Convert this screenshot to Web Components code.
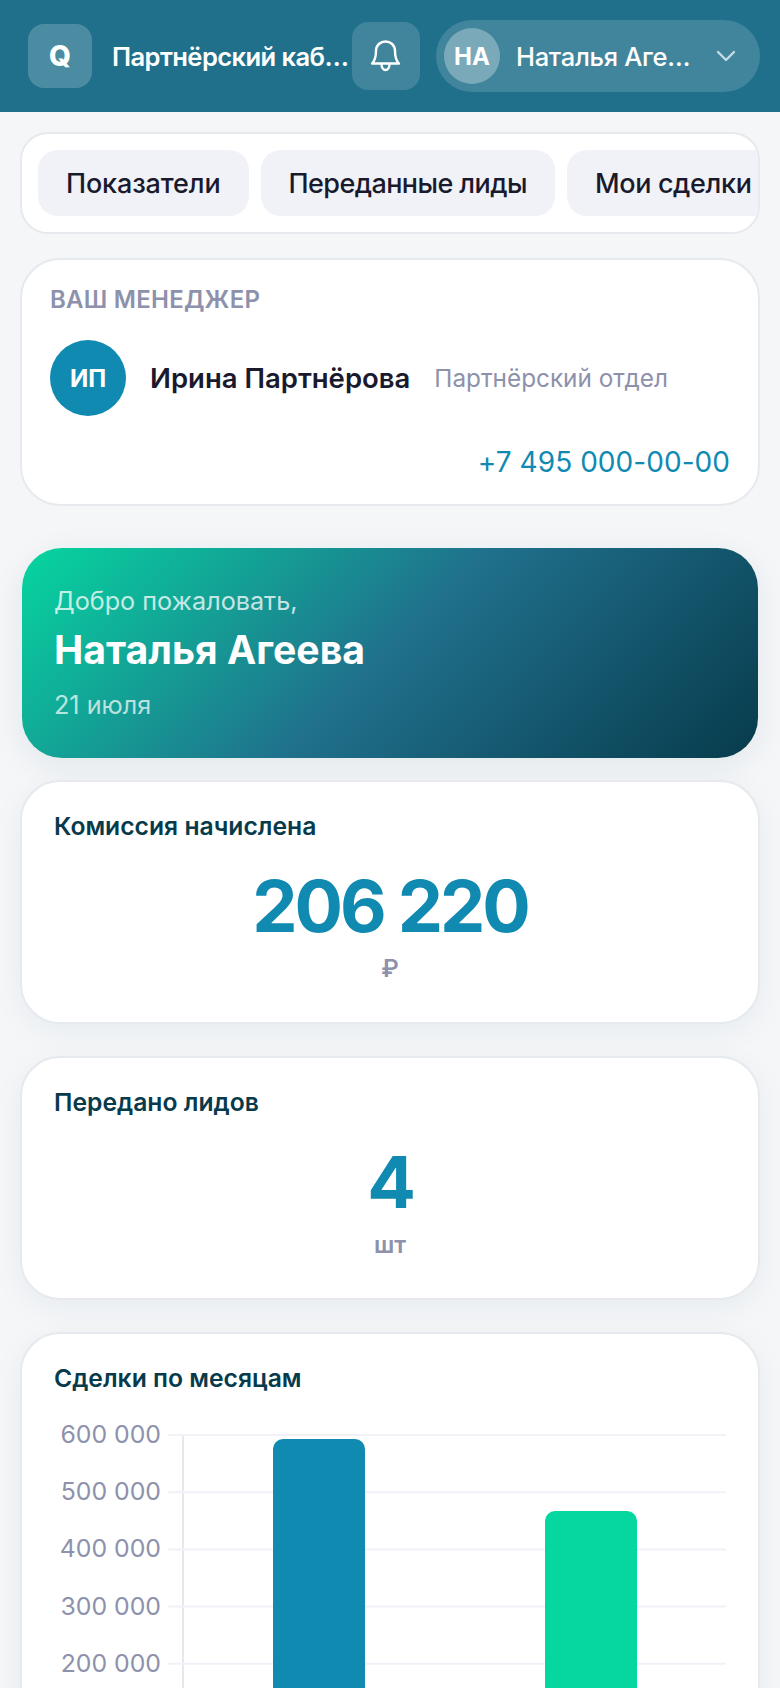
<!DOCTYPE html>
<html lang="ru">
<head>
<meta charset="utf-8">
<title>Партнёрский кабинет</title>
<style>
	html, body {
		height: 100%;
		margin: 0;
		overflow: hidden;
	}

	body {
		background: #f4f6f8;
		font-family: Inter, "Noto Sans", sans-serif;
		color: #1a1a2e;
	}

	main {
		display: flex;
		flex-direction: column;
		padding: 20px 20px 0;
	}
</style>
</head>
<body>
	<app-header title="Партнёрский кабинет" user="Наталья Агеева" initials="НА"></app-header>
	<main>
		<tab-bar>
			<tab-item selected>Показатели</tab-item>
			<tab-item style="letter-spacing: -0.58px">Переданные лиды</tab-item>
			<tab-item style="letter-spacing: -0.35px">Мои сделки</tab-item>
		</tab-bar>
		<manager-card name="Ирина Партнёрова" dept="Партнёрский отдел" phone="+7 495 000-00-00" initials="ИП"></manager-card>
		<hero-card name="Наталья Агеева" date="21 июля"></hero-card>
		<stat-card title="Комиссия начислена" value="206 220" unit="₽"></stat-card>
		<stat-card title="Передано лидов" value="4" unit="шт"></stat-card>
		<chart-card title="Сделки по месяцам"></chart-card>
	</main>

<script>
const cardStyles = `
	:host {
		display: block;
		flex: none;
		box-sizing: border-box;
		background: #fff;
		border: 2px solid #e6e9ee;
		border-radius: 40px;
		box-shadow: 0 8px 32px rgba(7, 59, 76, 0.05);
	}
`;

const headerTemplate = document.createElement('template');
headerTemplate.innerHTML = `
	<style>
		:host {
			display: flex;
			align-items: center;
			gap: 16px;
			box-sizing: border-box;
			height: 112px;
			padding: 0 20px 0 28px;
			background: #20708c;
			color: #fff;
		}

		.logo {
			flex: none;
			display: grid;
			place-items: center;
			width: 64px;
			height: 64px;
			margin-right: 4px;
			border-radius: 16px;
			background: rgba(255, 255, 255, 0.2);
			font-size: 28px;
			font-weight: 800;
		}

		.title {
			flex: 1;
			min-width: 0;
			margin-right: -16px;
			overflow: hidden;
			font-size: 25.6px;
			font-weight: 600;
			letter-spacing: -0.6px;
			white-space: nowrap;
			text-overflow: ellipsis;
		}

		.bell {
			flex: none;
			display: grid;
			place-items: center;
			width: 68px;
			height: 68px;
			border-radius: 16px;
			background: rgba(255, 255, 255, 0.15);
		}

		.user {
			flex: none;
			display: flex;
			align-items: center;
			box-sizing: border-box;
			width: 324px;
			height: 72px;
			padding: 0 24px 0 8px;
			border-radius: 36px;
			background: rgba(255, 255, 255, 0.15);
		}

		.avatar {
			flex: none;
			display: grid;
			place-items: center;
			width: 56px;
			height: 56px;
			margin-right: 16px;
			border-radius: 50%;
			background: rgba(255, 255, 255, 0.3);
			font-size: 24px;
			font-weight: 700;
		}

		.name {
			flex: 1;
			min-width: 0;
			overflow: hidden;
			font-size: 25.5px;
			font-weight: 500;
			letter-spacing: -0.3px;
			white-space: nowrap;
			text-overflow: ellipsis;
		}

		.chevron {
			flex: none;
			margin-left: 18px;
		}
	</style>
	<div class="logo">Q</div>
	<div class="title"></div>
	<div class="bell">
		<svg width="32" height="32" viewBox="0 0 32 32" fill="none" stroke="#fff" stroke-width="2.4" stroke-linecap="round" stroke-linejoin="round">
			<path d="M15.500 1.500c-5 0-9.500 3.500-9.500 9.500 0 7-1.500 10-4 12.500h27c-2.500-2.500-4-5.500-4-12.500 0-6-4.500-9.500-9.500-9.500z"/>
			<path d="M11.500 24c0 3.500 1.800 6 4 6s4-2.500 4-6"/>
		</svg>
	</div>
	<div class="user">
		<div class="avatar"></div>
		<div class="name"></div>
		<svg class="chevron" width="20" height="12" viewBox="0 0 20 12" fill="none" stroke="#fff" stroke-opacity="0.7" stroke-width="2.4" stroke-linecap="round" stroke-linejoin="round">
			<path d="M2 2l8 8 8-8"/>
		</svg>
	</div>
`;

class AppHeader extends HTMLElement {

	constructor() {
		super();

		this.attachShadow({ mode: 'open' });
		this.shadowRoot.appendChild(headerTemplate.content.cloneNode(true));
	}

	connectedCallback() {
		this.shadowRoot.querySelector('.title').textContent = this.getAttribute('title');
		this.shadowRoot.querySelector('.name').textContent = this.getAttribute('user');
		this.shadowRoot.querySelector('.avatar').textContent = this.getAttribute('initials');
		this.removeAttribute('title');
	}

}

const tabBarTemplate = document.createElement('template');
tabBarTemplate.innerHTML = `
	<style>
		${cardStyles}

		:host {
			display: flex;
			gap: 12px;
			height: 102px;
			padding: 16px;
			overflow: hidden;
			border-radius: 28px;
			box-shadow: none;
		}
	</style>
	<slot></slot>
`;

class TabBar extends HTMLElement {

	constructor() {
		super();

		this.attachShadow({ mode: 'open' });
		this.shadowRoot.appendChild(tabBarTemplate.content.cloneNode(true));
	}

}

const tabItemTemplate = document.createElement('template');
tabItemTemplate.innerHTML = `
	<style>
		:host {
			flex: none;
			display: flex;
			align-items: center;
			box-sizing: border-box;
			height: 66px;
			padding: 0 28px;
			border-radius: 20px;
			background: #f0f2f7;
			color: #1a1a2e;
			font-size: 27px;
			font-weight: 500;
			letter-spacing: -0.15px;
			white-space: nowrap;
		}
	</style>
	<slot></slot>
`;

class TabItem extends HTMLElement {

	constructor() {
		super();

		this.attachShadow({ mode: 'open' });
		this.shadowRoot.appendChild(tabItemTemplate.content.cloneNode(true));
	}

}

const managerTemplate = document.createElement('template');
managerTemplate.innerHTML = `
	<style>
		${cardStyles}

		:host {
			margin-top: 24px;
			height: 248px;
			padding: 25px 28px;
			box-shadow: none;
		}

		.label {
			color: #8d91ab;
			font-size: 24px;
			font-weight: 600;
			line-height: 30px;
			letter-spacing: 0.25px;
		}

		.person {
			display: flex;
			align-items: center;
			gap: 24px;
			margin-top: 25px;
		}

		.avatar {
			flex: none;
			display: grid;
			place-items: center;
			width: 76px;
			height: 76px;
			border-radius: 50%;
			background: #118ab2;
			color: #fff;
			font-size: 24px;
			font-weight: 700;
		}

		.name {
			font-size: 27.5px;
			font-weight: 600;
		}

		.dept {
			color: #8d91ab;
			font-size: 24.3px;
		}

		.phone {
			margin-top: 28px;
			color: #118ab2;
			font-size: 28px;
			line-height: 36px;
			letter-spacing: 0.05px;
			text-align: right;
		}
	</style>
	<div class="label">ВАШ МЕНЕДЖЕР</div>
	<div class="person">
		<div class="avatar"></div>
		<div class="name"></div>
		<div class="dept"></div>
	</div>
	<div class="phone"></div>
`;

class ManagerCard extends HTMLElement {

	constructor() {
		super();

		this.attachShadow({ mode: 'open' });
		this.shadowRoot.appendChild(managerTemplate.content.cloneNode(true));
	}

	connectedCallback() {
		for (const key of ['name', 'dept', 'phone']) {
			this.shadowRoot.querySelector('.' + key).textContent = this.getAttribute(key);
		}
		this.shadowRoot.querySelector('.avatar').textContent = this.getAttribute('initials');
	}

}

const heroTemplate = document.createElement('template');
heroTemplate.innerHTML = `
	<style>
		:host {
			display: block;
			flex: none;
			box-sizing: border-box;
			height: 210px;
			margin: 42px 2px 0;
			padding: 37px 32px;
			border-radius: 40px;
			background: linear-gradient(135deg, #06d6a0 0%, #20708c 50%, #073b4c 100%);
			box-shadow: 0 8px 32px rgba(7, 59, 76, 0.08);
			color: #fff;
		}

		.hello {
			font-size: 25.2px;
			line-height: 32px;
			opacity: 0.75;
		}

		.name {
			margin-top: 9px;
			font-size: 39.2px;
			font-weight: 700;
			line-height: 48px;
		}

		.date {
			margin-top: 15px;
			font-size: 25.2px;
			line-height: 32px;
			opacity: 0.7;
		}
	</style>
	<div class="hello">Добро пожаловать,</div>
	<div class="name"></div>
	<div class="date"></div>
`;

class HeroCard extends HTMLElement {

	constructor() {
		super();

		this.attachShadow({ mode: 'open' });
		this.shadowRoot.appendChild(heroTemplate.content.cloneNode(true));
	}

	connectedCallback() {
		this.shadowRoot.querySelector('.name').textContent = this.getAttribute('name');
		this.shadowRoot.querySelector('.date').textContent = this.getAttribute('date');
	}

}

const statTemplate = document.createElement('template');
statTemplate.innerHTML = `
	<style>
		${cardStyles}

		:host {
			height: 244px;
			margin-top: 22px;
			padding: 28px 32px;
		}

		:host(:not(:first-of-type)) {
			margin-top: 32px;
		}

		.title {
			color: #073b4c;
			font-size: 24.7px;
			font-weight: 600;
			line-height: 32px;
		}

		.value {
			margin-top: 26px;
			color: #118ab2;
			font-size: 72px;
			font-weight: 750;
			line-height: 76px;
			letter-spacing: -3.100px;
			text-align: center;
		}

		.unit {
			margin-top: 9px;
			color: #8d91ab;
			font-size: 24px;
			font-weight: 600;
			line-height: 32px;
			text-align: center;
		}
	</style>
	<div class="title"></div>
	<div class="value"></div>
	<div class="unit"></div>
`;

class StatCard extends HTMLElement {

	constructor() {
		super();

		this.attachShadow({ mode: 'open' });
		this.shadowRoot.appendChild(statTemplate.content.cloneNode(true));
	}

	connectedCallback() {
		for (const key of ['value', 'unit']) {
			this.shadowRoot.querySelector('.' + key).textContent = this.getAttribute(key);
		}
		this.shadowRoot.querySelector('.title').textContent = this.getAttribute('title');
		this.removeAttribute('title');
	}

}

const chartTemplate = document.createElement('template');
chartTemplate.innerHTML = `
	<style>
		${cardStyles}

		:host {
			margin-top: 32px;
			padding: 28px 32px;
		}

		.title {
			color: #073b4c;
			font-size: 24.7px;
			font-weight: 600;
			line-height: 32px;
		}

		svg {
			display: block;
			margin: 15px 0 0 -32px;
			overflow: visible;
		}

		text {
			fill: #8d91ab;
			font-size: 24.8px;
			text-anchor: end;
		}
	</style>
	<div class="title"></div>
	<svg width="736" height="400" viewBox="0 0 736 400"></svg>
`;

class ChartCard extends HTMLElement {

	constructor() {
		super();

		this.attachShadow({ mode: 'open' });
		this.shadowRoot.appendChild(chartTemplate.content.cloneNode(true));
	}

	connectedCallback() {
		this.shadowRoot.querySelector('.title').textContent = this.getAttribute('title');
		this.removeAttribute('title');
		this.render();
	}

	render() {
		const ticks = ['600 000', '500 000', '400 000', '300 000', '200 000'];
		const top = 26;
		const step = 57.2;
		const bottom = top + step * 6;
		let out = `<path d="M161 ${top}V${bottom}" stroke="#e6e8ee" stroke-width="2"/>`;

		for (const [i, tick] of ticks.entries()) {
			const y = top + step * i;
			out += `<path d="M146 ${y}H704" stroke="#f0f2f7" stroke-width="2"/>`;
			out += `<text x="139" y="${y + 8}">${tick}</text>`;
		}

		out += `<path d="M251 ${bottom}V${top + 14}a10 10 0 0 1 10-10h72a10 10 0 0 1 10 10V${bottom}z" fill="#118ab2"/>`;
		out += `<path d="M523 ${bottom}V${top + 86}a10 10 0 0 1 10-10h72a10 10 0 0 1 10 10V${bottom}z" fill="#06d6a0"/>`;

		this.shadowRoot.querySelector('svg').innerHTML = out;
	}

}

customElements.define('app-header', AppHeader);
customElements.define('tab-bar', TabBar);
customElements.define('tab-item', TabItem);
customElements.define('manager-card', ManagerCard);
customElements.define('hero-card', HeroCard);
customElements.define('stat-card', StatCard);
customElements.define('chart-card', ChartCard);
</script>
</body>
</html>
